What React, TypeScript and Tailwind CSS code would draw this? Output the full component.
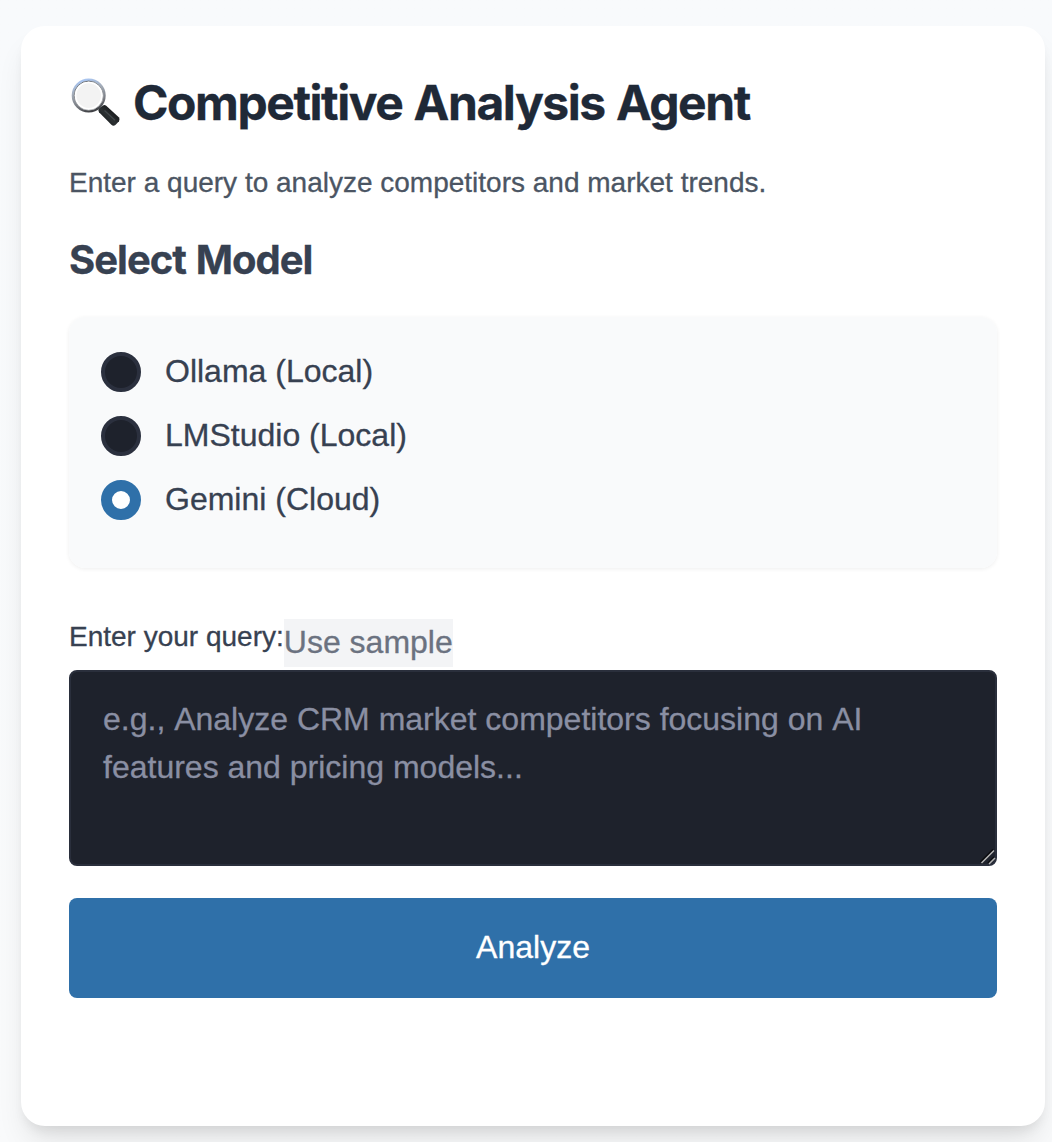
import { useState } from "react";

const models = ["Ollama (Local)", "LMStudio (Local)", "Gemini (Cloud)"];

function MagnifierIcon() {
  return (
    <svg width="50" height="50" viewBox="0 0 50 50" className="ml-[2px] shrink-0" aria-hidden="true">
      <defs>
        <linearGradient id="rim" x1="0.3" y1="0" x2="0.6" y2="1">
          <stop offset="0" stopColor="#a9c6f2" />
          <stop offset="0.35" stopColor="#a4acb8" />
          <stop offset="0.75" stopColor="#777a80" />
          <stop offset="1" stopColor="#3f4145" />
        </linearGradient>
        <linearGradient id="innerRim" x1="0" y1="0" x2="0.4" y2="1">
          <stop offset="0" stopColor="#5d6269" />
          <stop offset="1" stopColor="#b5b7ba" />
        </linearGradient>
        <linearGradient id="handle" x1="0" y1="1" x2="1" y2="0">
          <stop offset="0" stopColor="#050607" />
          <stop offset="0.45" stopColor="#2c3133" />
          <stop offset="0.65" stopColor="#1d2022" />
          <stop offset="1" stopColor="#08090a" />
        </linearGradient>
      </defs>
      <path d="M27 28 L31.5 32.5" stroke="#6d7074" strokeWidth="4" />
      <path
        d="M28 34.2 Q26.6 32.2 28.2 30.4 L32 27.4 Q33.6 26.4 35.2 27.7 L47.8 39.2 Q49.4 41.2 48 43.2 L44.4 47 Q42.4 48.5 40.4 46.8 Z"
        fill="url(#handle)"
      />
      <path d="M33.5 32.5 L44 42.2" stroke="#596063" strokeWidth="1.3" opacity=".55" />
      <circle cx="17.7" cy="17.5" r="15.7" fill="#f3f3f3" stroke="url(#rim)" strokeWidth="2.6" />
      <circle cx="17.7" cy="17.6" r="14.5" fill="none" stroke="url(#innerRim)" strokeWidth="1" />
      <circle cx="17.7" cy="17.6" r="13.1" fill="none" stroke="#fff" strokeWidth="1.6" />
    </svg>
  );
}

function ResizeGrip() {
  return (
    <svg
      width="16"
      height="16"
      viewBox="0 0 16 16"
      className="pointer-events-none absolute right-[1px] bottom-[1px]"
      aria-hidden="true"
    >
      <path d="M0.5 13 L13 0.5 M8 14 L14 8" stroke="#0b0c0f" strokeWidth="1.6" />
      <path d="M1.5 14 L14 1.5 M9 15 L15 9" stroke="#b4b4b4" strokeWidth="1.5" />
    </svg>
  );
}

export default function App() {
  const [model, setModel] = useState(2);
  const [query, setQuery] = useState("");

  return (
    <div className="h-[1142px] overflow-hidden bg-[#f9fafb] bg-linear-to-b from-[#f8fafc] to-[#f9fafb] pt-[26px] pl-[21px] font-['Liberation_Sans',sans-serif] [-webkit-text-stroke:0.3px]">
      <main className="h-[1100px] w-[1024px] rounded-3xl bg-white p-12 shadow-[0_20px_30px_-6px_rgba(0,0,0,0.1),0_8px_12px_-4px_rgba(0,0,0,0.08)]">
        <h1 className="flex h-[58px] items-center font-['Inter',sans-serif] text-[48px] leading-[58px] font-bold tracking-[-1.44px] text-[#1f2937] [word-spacing:1.2px]">
          <MagnifierIcon />
          <span className="ml-3 whitespace-nowrap">Competitive Analysis Agent</span>
        </h1>
        <p className="mt-[31px] text-[28px] leading-10 text-[#4b5563]">
          Enter a query to analyze competitors and market trends.
        </p>
        <h2 className="mt-[31px] font-['Inter',sans-serif] text-[40px] leading-[52px] font-bold tracking-[-0.98px] text-[#374151] [word-spacing:1.2px]">
          Select Model
        </h2>
        <fieldset className="mt-[31px] flex h-[251px] flex-col gap-4 rounded-2xl bg-[#f9fafb] px-8 pt-[31px] shadow-[0_1px_4px_rgba(0,0,0,0.07)]">
          {models.map((name, i) => (
            <label key={name} className="flex h-12 items-center text-[32px] text-[#374151]">
              <input
                type="radio"
                name="model"
                checked={model === i}
                onChange={() => setModel(i)}
                className="size-10 appearance-none rounded-full border-4 border-[#2b303e] bg-[#1e222c] checked:border-[11px] checked:border-[#2f70a9] checked:bg-white"
              />
              <span className="ml-6 pb-0.5">{name}</span>
            </label>
          ))}
        </fieldset>
        <div className="mt-[51px] flex h-12 items-start">
          <label htmlFor="query" className="text-[28px] leading-9 text-[#374151]">
            Enter your query:
          </label>
          <button
            type="button"
            onClick={() => setQuery("Analyze CRM market competitors focusing on AI features and pricing models")}
            className="h-12 bg-[#f3f4f6] pb-0.5 text-[32px] leading-[46px] text-[#6b7280]"
          >
            Use sample
          </button>
        </div>
        <div className="relative mt-[3px]">
          <textarea
            id="query"
            value={query}
            onChange={(e) => setQuery(e.target.value)}
            placeholder="e.g., Analyze CRM market competitors focusing on AI features and pricing models..."
            className="block h-[196px] w-full resize-none rounded-lg border-2 border-[#2a2f3c] bg-[#1e222c] px-8 pt-[23px] text-[32px] leading-12 text-white [font-kerning:none] placeholder:text-[#8a8fa3]"
          />
          <ResizeGrip />
        </div>
        <button type="button" className="mt-8 h-[100px] w-full rounded-lg bg-[#2f70a9] pb-0.5 text-[32px] text-white">
          Analyze
        </button>
      </main>
    </div>
  );
}
